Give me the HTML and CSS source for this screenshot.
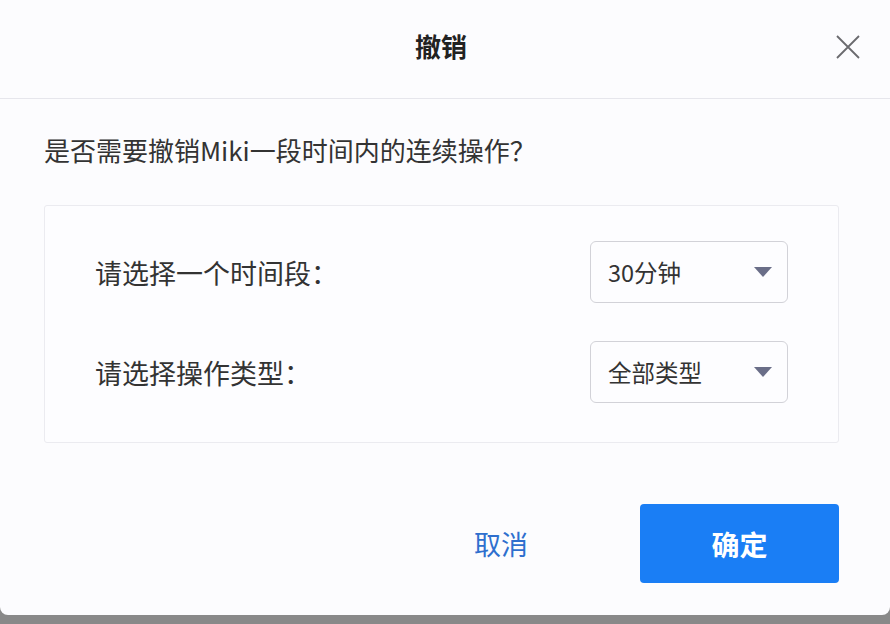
FILE: index.html
```html
<!DOCTYPE html>
<html lang="zh-CN">
<head>
    <meta charset="UTF-8">
    <meta name="viewport" content="width=device-width, initial-scale=1.0">
    <title>撤销</title>
    <link rel="stylesheet" href="styles.css">
</head>
<body>
    <div class="dialog">
        <div class="dialog-header">
            <h1>撤销</h1>
            <button class="close-btn" aria-label="关闭">
                <svg width="24" height="24" viewBox="0 0 24 24">
                    <path d="M1 1 L23 23 M23 1 L1 23" stroke="#6a6a6e" stroke-width="1.8" fill="none"/>
                </svg>
            </button>
        </div>

        <div class="dialog-body">
            <p class="question">是否需要撤销Miki一段时间内的连续操作？</p>

            <div class="options">
                <div class="option-row">
                    <span class="option-label">请选择一个时间段：</span>
                    <div class="select">
                        <span>30分钟</span>
                        <i class="caret"></i>
                    </div>
                </div>
                <div class="option-row">
                    <span class="option-label">请选择操作类型：</span>
                    <div class="select">
                        <span>全部类型</span>
                        <i class="caret"></i>
                    </div>
                </div>
            </div>
        </div>

        <div class="dialog-footer">
            <button class="btn-cancel">取消</button>
            <button class="btn-confirm">确定</button>
        </div>
    </div>
</body>
</html>
```

FILE: styles.css
```css
html, body {
    margin: 0;
    padding: 0;
}
body {
    width: 890px;
    height: 624px;
    background-color: #898989;
    font-family: "Noto Sans CJK SC", "Noto Sans", sans-serif;
    color: #333;
    overflow: hidden;
}
.dialog {
    height: 615px;
    background-color: #fcfcfe;
    border-radius: 0 0 8px 8px;
}
.dialog-header {
    position: relative;
    height: 90px;
    padding: 0 8px 8px 0;
    border-bottom: 1px solid #e6e6ec;
    display: flex;
    align-items: center;
    justify-content: center;
}
h1 {
    margin: 0;
    font-size: 26px;
    font-weight: bold;
    color: #222;
}
.close-btn {
    position: absolute;
    right: 30px;
    top: 35px;
    width: 24px;
    height: 24px;
    padding: 0;
    border: none;
    background: none;
    cursor: pointer;
}
.close-btn svg {
    display: block;
}
.dialog-body {
    padding: 0 51px 0 44px;
}
.question {
    margin: 33px 0 0 0;
    font-size: 26px;
    line-height: 36px;
    color: #333;
}
.options {
    margin-top: 37px;
    height: 238px;
    box-sizing: border-box;
    border: 1px solid #ebebf0;
    border-radius: 3px;
    background-color: #fdfdff;
    padding: 35px 50px 0 50px;
    display: flex;
    flex-direction: column;
    gap: 38px;
}
.option-row {
    display: flex;
    align-items: center;
    justify-content: space-between;
}
.option-label {
    font-size: 27px;
    color: #333;
}
.select {
    box-sizing: border-box;
    width: 198px;
    height: 62px;
    border: 1px solid #d2d2d8;
    border-radius: 6px;
    background-color: #fdfdff;
    padding: 0 15px 0 17px;
    display: flex;
    align-items: center;
    justify-content: space-between;
    font-size: 23.5px;
    color: #333;
}
.caret {
    width: 0;
    height: 0;
    border-left: 9px solid transparent;
    border-right: 9px solid transparent;
    border-top: 10px solid #6a6e88;
}
.dialog-footer {
    display: flex;
    justify-content: flex-end;
    align-items: center;
    padding: 61px 51px 0 0;
}
.btn-cancel {
    font-family: inherit;
    font-size: 27px;
    color: #2e6fce;
    background: none;
    border: none;
    padding: 0;
    margin-right: 112px;
    cursor: pointer;
}
.btn-confirm {
    font-family: inherit;
    width: 199px;
    height: 79px;
    background-color: #1a7ef5;
    color: #fff;
    font-size: 28px;
    font-weight: bold;
    border: none;
    border-radius: 4px;
    cursor: pointer;
}
```
